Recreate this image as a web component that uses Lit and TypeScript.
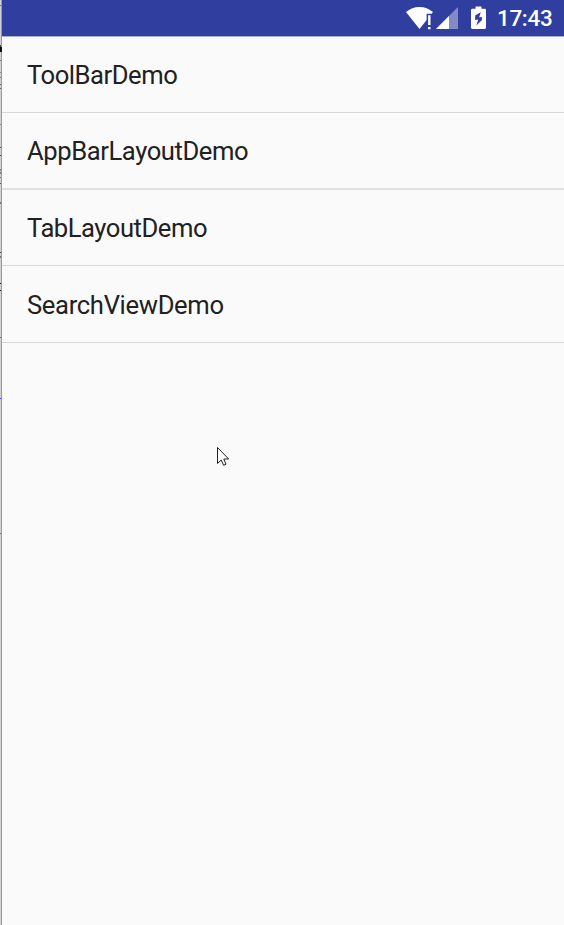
import { LitElement, html, css, svg } from "lit";
import { customElement } from "lit/decorators.js";

// Slivers of the window behind, visible along the left edge: [y, height, colour]
const slivers: [number, number, string][] = [
  [5, 1, "#777"], [45, 2, "#444"], [47, 5, "#111"], [60, 1, "#777"],
  [72, 1, "#888"], [77, 1, "#777"], [84, 1, "#666"], [88, 1, "#666"],
  [124, 1, "#888"], [147, 1, "#555"], [155, 1, "#444"], [169, 2, "#888"],
  [172, 2, "#778"], [177, 1, "#77a"], [183, 1, "#555"], [202, 2, "#778"],
  [252, 1, "#444"], [256, 2, "#778"], [283, 1, "#222"], [290, 1, "#222"],
  [337, 1, "#66a"], [398, 1, "#44d"], [533, 1, "#777"],
];

@customElement("status-bar")
class StatusBar extends LitElement {
  static styles = css`
    :host {
      display: flex;
      height: 36px;
      background: #303f9f;
      border-bottom: 1px solid #a9b0d7;
      box-sizing: content-box;
      justify-content: flex-end;
      align-items: center;
      color: #fff;
    }
    svg { flex: none; display: block; }
    .wifi { margin-right: 3px; }
    .signal { margin-right: 13px; }
    .battery { margin-right: 11px; }
    .time {
      font: 500 22.4px/36px Roboto, sans-serif;
      letter-spacing: -0.3px;
      width: 54px;
      margin-right: 13px;
      white-space: nowrap;
    }
  `;
  render() {
    return html`
      <svg class="wifi" width="27" height="36" viewBox="0 0 27 36">
        <path fill="#fff" d="M0 12.1C3.8 8.8 8.5 7 13.5 7S23.2 8.8 27 12.1L25.6 13.8H20.6V20L13.5 29Z"/>
        <path fill="#fff" d="M22.1 15.3h2.4v9.7h-2.4zM22.1 27h2.4v2.2h-2.4z"/>
      </svg>
      <svg class="signal" width="22" height="36" viewBox="0 0 22 36">
        <path fill="#fff" fill-opacity=".4" d="M22 7V29H0Z"/>
        <path fill="#fff" d="M13 16V29H0Z"/>
      </svg>
      <svg class="battery" width="15" height="36" viewBox="0 0 15 36">
        <path fill="#fff" fill-rule="evenodd" d="M4.6 6.5h5.8v2.3h3.2q1.4 0 1.4 1.4v17.4q0 1.4-1.4 1.4H1.4Q0 29 0 27.6V10.2Q0 8.8 1.4 8.8h3.2zM9.8 12.3L4.3 15.3L4 19.9L7.3 19.5L5.3 25.4L10.8 20.3L11 17L8.2 17.3Z"/>
      </svg>
      <span class="time">17:43</span>
    `;
  }
}

@customElement("app-root")
class AppRoot extends LitElement {
  static styles = css`
    :host {
      display: block;
      position: relative;
      box-sizing: border-box;
      height: 925px;
      overflow: hidden;
      background: #fafafa;
      padding-left: 2px;
    }
    .edge {
      position: absolute;
      left: 0;
      top: 0;
      display: block;
    }
    .list {
      margin: 0;
      padding: 0;
      list-style: none;
      font: 400 25.6px/30px Roboto, sans-serif;
      letter-spacing: -0.46px;
      color: #212121;
    }
    .item {
      box-sizing: border-box;
      height: 77px;
      padding: 23px 25px 0;
      border-bottom: 1px solid #d9d9d9;
    }
    .item:first-child { height: 76px; }
    .item:nth-child(2) {
      border-bottom: 2px solid #e1e1e1;
      letter-spacing: -0.42px;
    }
    .item:nth-child(3) { height: 76px; }
    .item:nth-child(4) {
      padding-top: 24px;
      letter-spacing: -0.33px;
    }
    .cursor {
      position: absolute;
      left: 217px;
      top: 446px;
    }
  `;
  render() {
    return html`
      <status-bar></status-bar>
      <ul class="list">
        ${["ToolBarDemo", "AppBarLayoutDemo", "TabLayoutDemo", "SearchViewDemo"].map(
          (name) => html`<li class="item">${name}</li>`
        )}
      </ul>
      <svg class="edge" width="2" height="925" shape-rendering="crispEdges">
        <rect width="1" height="925" fill="#d2d2d2"/>
        <rect x="1" width="1" height="925" fill="#999"/>
        ${slivers.map(([y, h, c]) => svg`<rect y=${y} width=${h > 4 ? 2 : 1} height=${h} fill=${c}/>`)}
      </svg>
      <svg class="cursor" width="13" height="21" viewBox="0 0 13 21">
        <path fill="#fff" stroke="#222" stroke-width="1" d="M.5 1.5V17.5L4.2 14L6.6 19.3L9 18.2L6.8 13H11.7Z"/>
      </svg>
    `;
  }
}
